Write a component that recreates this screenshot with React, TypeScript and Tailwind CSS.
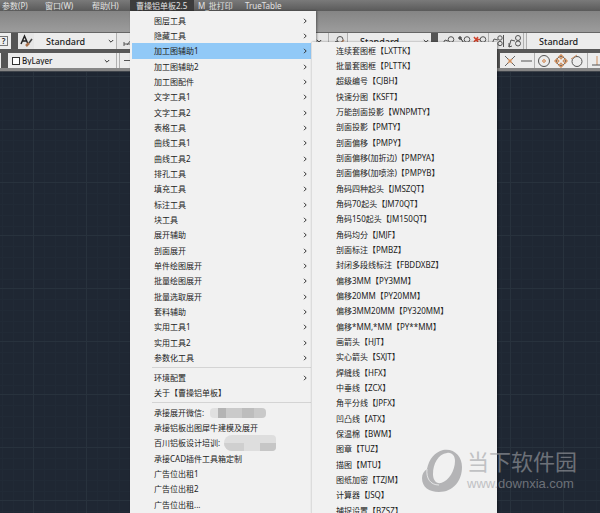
import { ReactNode } from 'react';
import { clsx } from 'clsx';

type MenuEntry = { label: string; submenu?: boolean; active?: boolean; mask?: 'wechat' | 'training' };

const menuBar = ['参数(P)', '窗口(W)', '帮助(H)', '曹操铝单板2.5', 'M_批打印', 'TrueTable'];

const toolGroup: MenuEntry[] = [
  '图层工具', '隐藏工具', '加工图辅助1', '加工图辅助2', '加工图配件', '文字工具1', '文字工具2', '表格工具',
  '曲线工具1', '曲线工具2', '排孔工具', '填充工具', '标注工具', '块工具', '展开辅助', '剖面展开', '单件绘图展开',
  '批量绘图展开', '批量选取展开', '套料辅助', '实用工具1', '实用工具2', '参数化工具',
].map((label) => ({ label, submenu: true, active: label === '加工图辅助1' }));

const settingsGroup: MenuEntry[] = [
  { label: '环境配置', submenu: true },
  { label: '关于【曹操铝单板】' },
];

const adGroup: MenuEntry[] = [
  { label: '承接展开微信:', mask: 'wechat' },
  { label: '承接铝板出图犀牛建模及展开' },
  { label: '百川铝板设计培训:', mask: 'training' },
  { label: '承接CAD插件工具箱定制' },
  { label: '广告位出租1' },
  { label: '广告位出租2' },
  { label: '广告位出租...' },
];

const commands = [
  '连续套图框【LXTTK】', '批量套图框【PLTTK】', '超级编号【CJBH】', '快速分图【KSFT】', '万能剖面投影【WNPMTY】',
  '剖面投影【PMTY】', '剖面偏移【PMPY】', '剖面偏移(加折边)【PMPYA】', '剖面偏移(加喷涂)【PMPYB】',
  '角码四种起头【JMSZQT】', '角码70起头【JM70QT】', '角码150起头【JM150QT】', '角码均分【JMJF】', '剖面标注【PMBZ】',
  '封闭多段线标注【FBDDXBZ】', '偏移3MM【PY3MM】', '偏移20MM【PY20MM】', '偏移3MM20MM【PY320MM】',
  '偏移*MM,*MM【PY**MM】', '画箭头【HJT】', '实心箭头【SXJT】', '焊缝线【HFX】', '中垂线【ZCX】', '角平分线【JPFX】',
  '凹凸线【ATX】', '保温棉【BWM】', '图章【TUZ】', '描图【MTU】', '图纸加密【TZJM】', '计算器【JSQ】', '捕捉设置【BZSZ】',
];

function Chevron({ className }: { className?: string }) {
  return (
    <svg viewBox="0 0 6 6" fill="none" stroke="#333" className={clsx('size-1.5', className)} aria-hidden="true">
      <path d="M2 .8 4.2 3 2 5.2" />
    </svg>
  );
}

function Combo({ label, className, text }: { label: string; className: string; text?: string }) {
  return (
    <div className={clsx('relative flex h-full shrink-0 items-center', className)}>
      <select aria-label={label} className={clsx('h-full w-full appearance-none bg-transparent leading-none font-medium outline-none', text)}>
        <option>{label}</option>
      </select>
      <Chevron className="pointer-events-none absolute right-0.5 rotate-90" />
    </div>
  );
}

function Divider({ className }: { className?: string }) {
  return <span className={clsx('h-full w-px shrink-0 bg-[#b0b0b0]', className)} />;
}

function ToolButton({ label, className = 'w-4', children }: { label: string; className?: string; children: ReactNode }) {
  return (
    <button aria-label={label} className={clsx('flex h-full shrink-0 items-center justify-center', className)}>
      <svg viewBox="0 0 14 14" fill="none" stroke="#555" className="size-3.5 shrink-0" aria-hidden="true">
        {children}
      </svg>
    </button>
  );
}

// Mosaic over the contact numbers
function Mask({ kind }: { kind: 'wechat' | 'training' }) {
  if (kind === 'wechat') {
    return (
      <span className="ml-1.5 flex h-2.5 w-14 overflow-hidden rounded-sm">
        <span className="w-2 bg-[#e0e0e0]" />
        <span className="w-2 bg-[#b4b4b4]" />
        <span className="w-4 bg-[#cacaca]" />
        <span className="w-3 bg-[#bdbdbd]" />
        <span className="flex-1 bg-[#c9c9c9]" />
      </span>
    );
  }
  return (
    <span className="-my-1 ml-1 flex h-4 w-[52px] overflow-hidden rounded-l-lg rounded-r-sm bg-[#dedede]">
      <span className="mt-2 w-5 bg-[#cfcfcf]" />
      <span className="flex-1" />
      <span className="mt-2 w-4 bg-[#c6c6c6]" />
    </span>
  );
}

const rows = '[&>li]:h-[15px] [&>li:nth-child(3n)]:h-4';

function MenuGroup({ entries }: { entries: MenuEntry[] }) {
  return (
    <ul role="menu" className={rows}>
      {entries.map(({ label, submenu, active, mask }) => (
        <li key={label} role="none">
          <button
            role="menuitem"
            className={clsx('flex h-full w-full items-center pr-2 pl-[22px] whitespace-nowrap', active && 'bg-[#91c9f7]')}
          >
            {label}
            {mask && <Mask kind={mask} />}
            {submenu && <Chevron className="ml-auto" />}
          </button>
        </li>
      ))}
    </ul>
  );
}

function Separator() {
  return <hr className="my-0.5 mr-1 ml-5 border-[#d4d4d4]" />;
}

function Watermark() {
  return (
    <div className="pointer-events-none absolute top-[449px] left-[421px] flex items-center gap-1 opacity-60">
      <svg viewBox="0 0 42 44" className="h-11 w-[42px]" aria-hidden="true">
        <path
          fill="#8c8d90"
          fillRule="evenodd"
          d="M22 1C33-1 41 7 41 18C41 32 32 43 18 43C8 43 1 38 1 29C1 25 3 22 6 20C8 10 14 3 22 1ZM26 4C17 5 12 15 12 25C12 31 15 35 20 34C28 32 34 21 34 12C34 7 31 3 26 4Z"
        />
        <path stroke="#f1f1f1" strokeWidth=".8" fill="none" d="M6 20C5 29 9 36 18 36" />
      </svg>
      <div className="flex flex-col gap-0.5 text-[#a0a2a6]">
        <span className="text-[22px] leading-6">当下软件园</span>
        <span className="font-['Liberation_Sans',sans-serif] text-[13px] leading-[18px]">www.downxia.com</span>
      </div>
    </div>
  );
}

export default function App() {
  return (
    <div className="relative flex min-h-screen flex-col overflow-hidden bg-[#5c5c5c] font-['Noto_Sans','Noto_Sans_CJK_SC',sans-serif] text-[8px] text-[#222]">
      <nav className="flex h-[11px] items-center bg-linear-to-b from-[#7a7a7a] to-[#5a5a5a] text-[#e2e2e2]">
        {menuBar.map((item, i) => (
          <button
            key={item}
            className={clsx(
              'h-full shrink-0 text-left leading-[8px] whitespace-nowrap',
              i === 0 && 'w-[45px] pl-0.5',
              i === 1 && 'w-[47px]',
              i === 2 && 'w-[38px]',
              i === 3 && 'w-16 bg-[#3c3c3c] pl-1.5',
              i === 4 && 'w-[51px] pl-1',
            )}
          >
            {item}
          </button>
        ))}
      </nav>

      <div className="h-[22px] border-b border-[#666] bg-linear-to-b from-[#858585] to-[#9c9c9c]" />

      <div className="flex h-4 bg-[#e6e6e6] text-[9px]">
        <button aria-label="帮助" className="flex w-[11px] shrink-0 items-center bg-[#eee]">
          <span className="flex h-2.5 w-2 items-center justify-center border border-l-0 border-[#777] text-[8px] font-semibold">?</span>
        </button>
        <span className="w-[7px] shrink-0 bg-[#555]" />
        <ToolButton label="文字样式">
          <path stroke="#222" strokeWidth="1.5" d="M2 10 5.5 2 9 10M3.5 7h4" />
          <path stroke="#a9714b" strokeWidth="2.5" d="m7 12 3-3" />
          <path stroke="#444" strokeWidth="1.5" d="m10 9 3-4" />
        </ToolButton>
        <Combo label="Standard" className="w-[82px] bg-[#ececec]" text="pl-3" />
        <Divider />
        <ToolButton label="标注样式" className="w-5">
          <path d="M4 8v4M4 10h9M7 11l4-5" />
        </ToolButton>
        <span className="flex w-[187px] shrink-0 items-center justify-end pr-0.5">
          <Chevron className="rotate-90" />
        </span>
        <Divider className="ml-1" />
        <ToolButton label="多重引线样式" className="w-[18px]">
          <path d="m2 12 3-5 3 2" />
          <circle cx="9" cy="5.5" r="3" />
          <path stroke="#b98563" strokeWidth="1.5" d="m9 10 4-4" />
        </ToolButton>
        <Divider />
        <Combo label="Standard" className="w-[83px] bg-[#ececec]" text="pl-3" />
        <span className="w-[7px] shrink-0 bg-[#555]" />
        <span className="w-0.5 shrink-0" />
        <ToolButton label="多重引线">
          <path d="m1 11 3-5 3 1" />
          <circle cx="10" cy="5.5" r="2.8" />
        </ToolButton>
        <ToolButton label="添加引线">
          <path stroke="#222" d="M1 4h4M3 2v4M4 5l3 4" />
          <circle cx="10" cy="5.5" r="2.8" />
        </ToolButton>
        <ToolButton label="删除引线">
          <path stroke="#d0432c" strokeWidth="1.5" d="m1 3 4 5M5 3 1 8M3 5.5h4" />
          <circle cx="10" cy="5.5" r="2.8" />
        </ToolButton>
        <Divider />
        <ToolButton label="对齐引线" className="w-[18px]">
          <path d="m1 10 2-5 4 1M12.5 1v12" />
          <circle cx="9" cy="4" r="2.2" />
          <circle cx="9" cy="9.5" r="2.2" />
        </ToolButton>
        <ToolButton label="合并引线">
          <path d="m1 13 2-7 4 1M1 9v4l3-1" />
          <circle cx="10" cy="4" r="2.5" />
          <circle cx="10" cy="9.5" r="2.5" />
        </ToolButton>
        <Divider />
        <Divider className="ml-0.5" />
        <Combo label="Standard" className="w-[86px] bg-[#ececec]" text="pl-3" />
      </div>

      <div className="h-1 bg-[#585858]" />

      <div className="flex h-[15px] bg-[#ececec]">
        <span className="w-px shrink-0" />
        <span className="w-[7px] shrink-0 bg-[#555]" />
        <span className="my-auto ml-1 size-2 shrink-0 border border-[#333] bg-white" />
        <Combo label="ByLayer" className="w-[92px]" text="pl-0.5" />
        <Divider className="ml-1" />
        <Divider className="ml-0.5" />
        <span className="my-auto mr-1 ml-1 h-px w-[366px] shrink-0 bg-[#555]" />
        <span className="w-1.5 shrink-0 bg-[#555]" />
        <ToolButton label="交点" className="w-5">
          <path stroke="#666" d="m2 2 10 10M12 2 2 12" />
          <path stroke="#cf8f5e" strokeWidth="1.5" d="m5 5 4 4M9 5 5 9" />
        </ToolButton>
        <ToolButton label="延长线" className="w-3.5">
          <path d="M1 7h11" />
        </ToolButton>
        <Divider />
        <ToolButton label="圆心" className="w-[18px]">
          <circle cx="7" cy="7" r="5.5" />
          <circle cx="7" cy="7" r="1.3" stroke="#cf7f45" />
        </ToolButton>
        <ToolButton label="象限点">
          <circle cx="7" cy="7" r="4.5" />
          <path stroke="#cf8f5e" strokeWidth="1.3" d="m7 .8 2 2-2 2-2-2zM7 9.2l2 2-2 2-2-2zM2.8 5l2 2-2 2-2-2zM11.2 5l2 2-2 2-2-2z" />
        </ToolButton>
        <ToolButton label="切点">
          <circle cx="7" cy="7.5" r="5" />
          <path stroke="#cf8f5e" d="M1 5 7 1" />
        </ToolButton>
        <Divider className="ml-0.5" />
        <ToolButton label="垂足" className="w-[18px]">
          <path stroke="#cf8f5e" d="M7 2v9" />
          <path d="M2 11h10" />
        </ToolButton>
      </div>
      <div className="h-1 border-b border-[#3f444b] bg-[#868686]" />

      <main className="flex-1 bg-[#1f2733] bg-[linear-gradient(#28323d_1px,transparent_1px),linear-gradient(90deg,#28323d_1px,transparent_1px),repeating-linear-gradient(#212a36_0_1px,transparent_1px_11px),repeating-linear-gradient(90deg,#212a36_0_1px,transparent_1px_11px)] bg-size-[53px_53px] bg-position-[33px_4px]" />

      <div className="absolute inset-y-0 top-[11px] left-[130px] w-[186px] bg-[#f1f1f1] pt-0.5 pl-0.5 shadow-[1px_0_2px_#0006]">
        <MenuGroup entries={toolGroup} />
        <Separator />
        <MenuGroup entries={settingsGroup} />
        <Separator />
        <MenuGroup entries={adGroup} />
      </div>
      <div className="absolute top-[42px] bottom-0 left-[311px] w-[186px] overflow-hidden border-l border-[#dcdcdc] bg-[#f1f1f1] pt-px shadow-[1px_0_2px_#0006]">
        <ul role="menu" className={rows}>
          {commands.map((command) => (
            <li key={command} role="none">
              <button role="menuitem" className="flex h-full w-full items-center pl-6 whitespace-nowrap">
                {command}
              </button>
            </li>
          ))}
        </ul>
      </div>
      <Watermark />
    </div>
  );
}
